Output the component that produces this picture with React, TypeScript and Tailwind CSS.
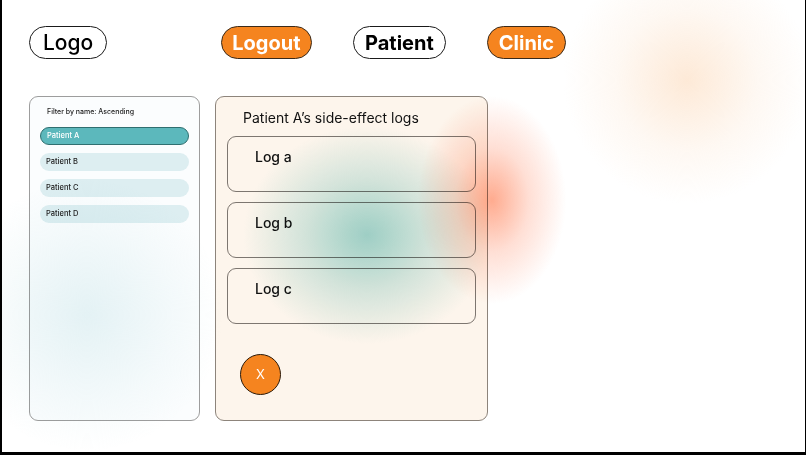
import React from 'react';

const patients = ['Patient A', 'Patient B', 'Patient C', 'Patient D'];
const logs = ['Log a', 'Log b', 'Log c'];

function Pill({ label, orange, pad }: { label: string; orange?: boolean; pad: string }) {
  return (
    <div
      className={
        (orange
          ? 'h-[33px] flex items-center rounded-full border-[1.5px] border-[#3a2a1a] bg-[#f5841f] text-white font-bold text-[20px] '
          : 'h-[33px] flex items-center rounded-full border-[1.5px] border-[#1a1a1a] bg-white text-black font-bold text-[20px] ') + pad
      }
    >
      {label}
    </div>
  );
}

export default function App() {
  return (
    <div className="relative w-[806px] h-[455px] overflow-hidden bg-white border-l-2 border-r border-b-[3px] border-black font-['Inter',sans-serif]">
      {/* header */}
      <div className="flex items-center pt-[26px] pl-[27px]">
        <div className="h-[33px] flex items-center px-[13px] rounded-full border-[1.5px] border-[#1a1a1a] text-[21px] font-medium text-black">
          Logo
        </div>
        <div className="flex items-center gap-[41px] ml-[114px]">
          <Pill label="Logout" orange pad="px-[10px]" />
          <Pill label="Patient" pad="px-[11.5px]" />
          <Pill label="Clinic" orange pad="px-[10.5px]" />
        </div>
      </div>

      {/* body */}
      <div className="flex gap-[15px] pl-[27px] mt-[37px]">
        <div className="w-[171px] h-[325px] rounded-[9px] border border-[#9d9d9d] bg-[#f9fcfd]/70 px-[10px] pt-[10px]">
          <div className="text-[7px] font-medium text-[#222] pl-[7px]">Filter by name: Ascending</div>
          <div className="flex flex-col gap-[8px] mt-[9px]">
            {patients.map((p, i) => (
              <div
                key={p}
                className={
                  i === 0
                    ? 'h-[18px] flex items-center pl-[6px] rounded-full border border-[#2f6f70] bg-[#5cb8bc] text-white text-[7.5px] font-medium'
                    : 'h-[18px] flex items-center pl-[6px] rounded-full bg-[#ddeef1] text-[#222] text-[7.5px] font-medium'
                }
              >
                {p}
              </div>
            ))}
          </div>
        </div>

        <div className="w-[273px] h-[325px] rounded-[9px] border border-[#8d847b] bg-[#fdf5ec] px-[11px] pt-[11px]">
          <div className="text-[14px] text-[#111] pl-[16px] leading-[20px]">Patient A’s side-effect logs</div>
          <div className="flex flex-col gap-[10px] mt-[8px]">
            {logs.map((l) => (
              <div key={l} className="h-[56px] rounded-[9px] border border-[#7d7670] pl-[27px] pt-[9px] text-[14px] font-medium text-[#111]">
                {l}
              </div>
            ))}
          </div>
          <div className="mt-[30px] ml-[13px] w-[41px] h-[41px] rounded-full border-[1.5px] border-[#2a1a0a] bg-[#f5841f] flex items-center justify-center text-white text-[13px]">
            X
          </div>
        </div>
      </div>

      {/* soft colour blobs over the page */}
      <div className="pointer-events-none absolute left-[240px] top-[125px] w-[250px] h-[220px] rounded-full mix-blend-multiply bg-[radial-gradient(ellipse,rgba(135,205,202,0.8)_0%,rgba(160,215,212,0.45)_35%,transparent_70%)]" />
      <div className="pointer-events-none absolute left-[415px] top-[95px] w-[150px] h-[210px] rounded-full mix-blend-multiply bg-[radial-gradient(ellipse,rgba(255,150,115,0.8)_0%,rgba(255,175,150,0.4)_35%,transparent_70%)]" />
      <div className="pointer-events-none absolute left-[560px] top-[-45px] w-[250px] h-[250px] rounded-full mix-blend-multiply bg-[radial-gradient(circle,rgba(253,228,205,0.8)_0%,rgba(253,238,224,0.4)_40%,transparent_70%)]" />
      <div className="pointer-events-none absolute left-[-50px] top-[180px] w-[270px] h-[270px] rounded-full mix-blend-multiply bg-[radial-gradient(circle,rgba(226,241,243,0.8)_0%,rgba(236,246,247,0.4)_45%,transparent_72%)]" />
    </div>
  );
}
